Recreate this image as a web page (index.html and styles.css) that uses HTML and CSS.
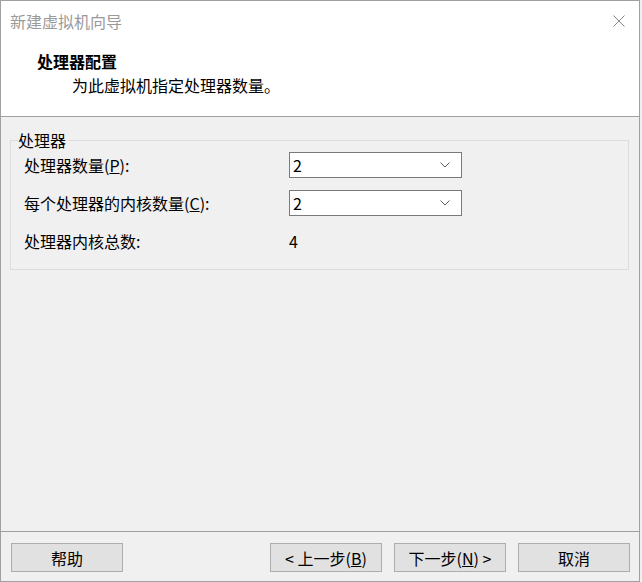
FILE: index.html
```html
<!DOCTYPE html>
<html lang="zh-CN">
<head>
<meta charset="utf-8">
<title>新建虚拟机向导</title>
<link rel="stylesheet" href="styles.css">
</head>
<body>
<div class="window">
  <div class="header">
    <div class="titlebar">
      <span class="title">新建虚拟机向导</span>
      <svg class="close" width="12" height="12" viewBox="0 0 12 12"><path d="M0.5 0.5 L11.5 11.5 M11.5 0.5 L0.5 11.5" stroke="#8a8a8a" stroke-width="1" fill="none"/></svg>
    </div>
    <div class="page-head">
      <div class="h-title">处理器配置</div>
      <div class="h-sub">为此虚拟机指定处理器数量。</div>
    </div>
  </div>
  <div class="content">
    <fieldset class="group">
      <legend>处理器</legend>
      <div class="grid">
        <div class="label">处理器数量(<u>P</u>):</div>
        <div class="combo"><span>2</span><svg width="10" height="6" viewBox="0 0 10 6"><path d="M0.5 0.5 L5 5 L9.5 0.5" stroke="#606060" stroke-width="1" fill="none"/></svg></div>
        <div class="label">每个处理器的内核数量(<u>C</u>):</div>
        <div class="combo"><span>2</span><svg width="10" height="6" viewBox="0 0 10 6"><path d="M0.5 0.5 L5 5 L9.5 0.5" stroke="#606060" stroke-width="1" fill="none"/></svg></div>
        <div class="label">处理器内核总数:</div>
        <div class="value">4</div>
      </div>
    </fieldset>
  </div>
  <div class="footer">
    <button class="btn">帮助</button>
    <div class="spacer"></div>
    <button class="btn">&lt; 上一步(<u>B</u>)</button>
    <button class="btn">下一步(<u>N</u>) &gt;</button>
    <button class="btn">取消</button>
  </div>
</div>
</body>
</html>
```
FILE: styles.css
```css
html, body {
  margin: 0;
  padding: 0;
  background: #f0f0f0;
}
body {
  font-family: "Noto Sans CJK SC", "Noto Sans", sans-serif;
  font-size: 16px;
  color: #000;
}
.window {
  width: 640px;
  height: 582px;
  box-sizing: border-box;
  border: 1px solid #a0a0a0;
  display: flex;
  flex-direction: column;
  background: #f0f0f0;
}
.header {
  height: 115px;
  background: #fff;
  border-bottom: 1px solid #a0a0a0;
}
.titlebar {
  height: 40px;
  display: flex;
  align-items: center;
  justify-content: space-between;
  padding: 0 14px 0 9px;
}
.title {
  color: #9a9a9a;
  line-height: 40px;
}
.close {
  display: block;
}
.page-head {
  padding-top: 8px;
}
.h-title {
  font-weight: bold;
  line-height: 24px;
  padding-left: 36px;
}
.h-sub {
  line-height: 24px;
  padding-left: 71px;
}
.content {
  flex: 1;
  padding: 13px 10px 0 9px;
}
.group {
  margin: 0;
  padding: 2px 13px 15px 13px;
  border: 1px solid #dcdcdc;
  min-width: 0;
}
.group legend {
  padding: 0;
  margin-left: -6px;
  line-height: 20px;
  padding-right: 2px;
}
.grid {
  display: grid;
  grid-template-columns: 265px 173px;
  grid-auto-rows: 26px;
  row-gap: 12px;
  align-items: center;
}
.label, .value {
  line-height: 20px;
}
.combo {
  height: 26px;
  box-sizing: border-box;
  border: 1px solid #7a7a7a;
  background: #fff;
  display: flex;
  align-items: center;
  justify-content: space-between;
  padding: 0 11px 0 3px;
  line-height: 20px;
}
.combo svg {
  display: block;
}
.footer {
  height: 50px;
  box-sizing: border-box;
  border-top: 1px solid #a0a0a0;
  display: flex;
  align-items: flex-start;
  gap: 12px;
  padding: 11px 9px 0 10px;
}
.spacer {
  flex: 1;
}
.btn {
  width: 112px;
  height: 29px;
  box-sizing: border-box;
  border: 1px solid #adadad;
  background: #e1e1e1;
  font-family: inherit;
  font-size: 16px;
  color: #000;
  padding: 0;
  line-height: 20px;
}
```
